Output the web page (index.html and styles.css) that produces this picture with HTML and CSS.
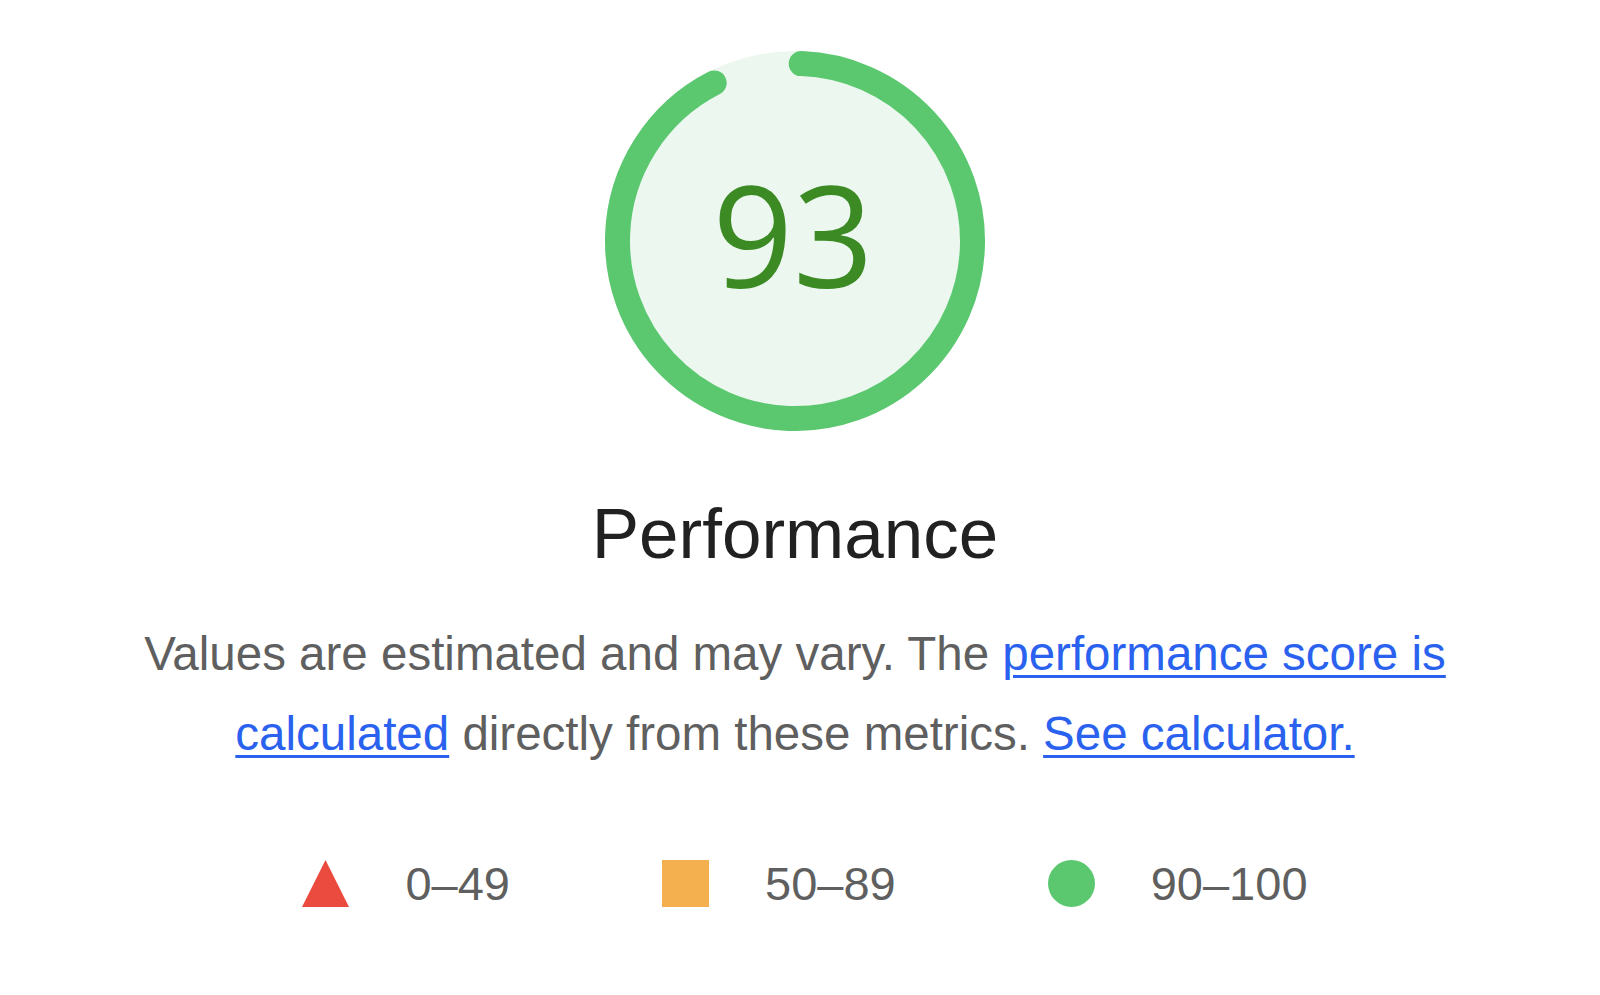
FILE: index.html
```html
<!DOCTYPE html>
<html lang="en">
<head>
    <meta charset="UTF-8">
    <meta name="viewport" content="width=device-width, initial-scale=1.0">
    <title>Performance</title>
    <link rel="stylesheet" href="styles.css">
</head>
<body>

<!-- Score summary -->
<div class="report">
    <div class="gauge">
        <svg width="380" height="380" viewBox="0 0 380 380">
            <circle class="gauge-base" cx="190" cy="190" r="190"></circle>
            <!-- arc: 93% of the circle, rotated so the rounded cap starts at the top -->
            <circle class="gauge-arc" cx="190" cy="190" r="177.5"
                    stroke-dasharray="1024.7 1115.3"
                    transform="rotate(-88 190 190)"></circle>
            <text class="gauge-score" x="188" y="237" text-anchor="middle">93</text>
        </svg>
    </div>

    <h1 class="title">Performance</h1>

    <p class="description">
        Values are estimated and may vary. The <a href="#">performance score is calculated</a>
        directly from these metrics. <a href="#">See calculator.</a>
    </p>

    <div class="legend">
        <div class="legend-item">
            <svg class="shape" width="47" height="47" viewBox="0 0 47 47">
                <polygon points="23.5,0 47,47 0,47" fill="#eb4a3e"></polygon>
            </svg>
            <span>0–49</span>
        </div>
        <div class="legend-item">
            <span class="shape square"></span>
            <span>50–89</span>
        </div>
        <div class="legend-item">
            <span class="shape dot"></span>
            <span>90–100</span>
        </div>
    </div>
</div>

</body>
</html>
```

FILE: styles.css
```css
body {
    font-family: 'Liberation Sans', Arial, Helvetica, sans-serif;
    background-color: #ffffff;
    margin: 0;
    padding: 0;
}

/* Page column, centred a little left of the window centre */
.report {
    display: flex;
    flex-direction: column;
    align-items: center;
    padding: 51px 10px 0 0;
}

/* Gauge */
.gauge svg {
    display: block;
}

.gauge-base {
    fill: #ecf8ef; /* pale green disc */
}

.gauge-arc {
    fill: none;
    stroke: #5bc870;
    stroke-width: 25;
    stroke-linecap: round;
}

.gauge-score {
    font-family: 'Open Sans', Roboto, sans-serif;
    font-size: 141px;
    fill: #3c8a24;
}

/* Title */
.title {
    margin: 60px 0 0;
    font-size: 71px;
    font-weight: normal;
    line-height: 85px;
    color: #212121;
}

/* Description */
.description {
    max-width: 1360px;
    margin: 38px 0 0;
    font-size: 47.5px;
    line-height: 80px;
    color: #5f5f5f;
    text-align: center;
}

.description a {
    color: #2a62ef;
    text-decoration-thickness: 3px;
    text-underline-offset: 5px;
}

/* Legend */
.legend {
    display: flex;
    gap: 152px;
    margin-top: 86px;
    padding-left: 20px;
}

.legend-item {
    display: flex;
    align-items: center;
    gap: 56px;
    font-size: 47px;
    line-height: 47px;
    color: #5f5f5f;
}

.shape {
    display: block;
    flex-shrink: 0;
}

.square {
    width: 47px;
    height: 47px;
    background-color: #f4af4e;
}

.dot {
    width: 47px;
    height: 47px;
    border-radius: 50%;
    background-color: #5bc870;
}
```
